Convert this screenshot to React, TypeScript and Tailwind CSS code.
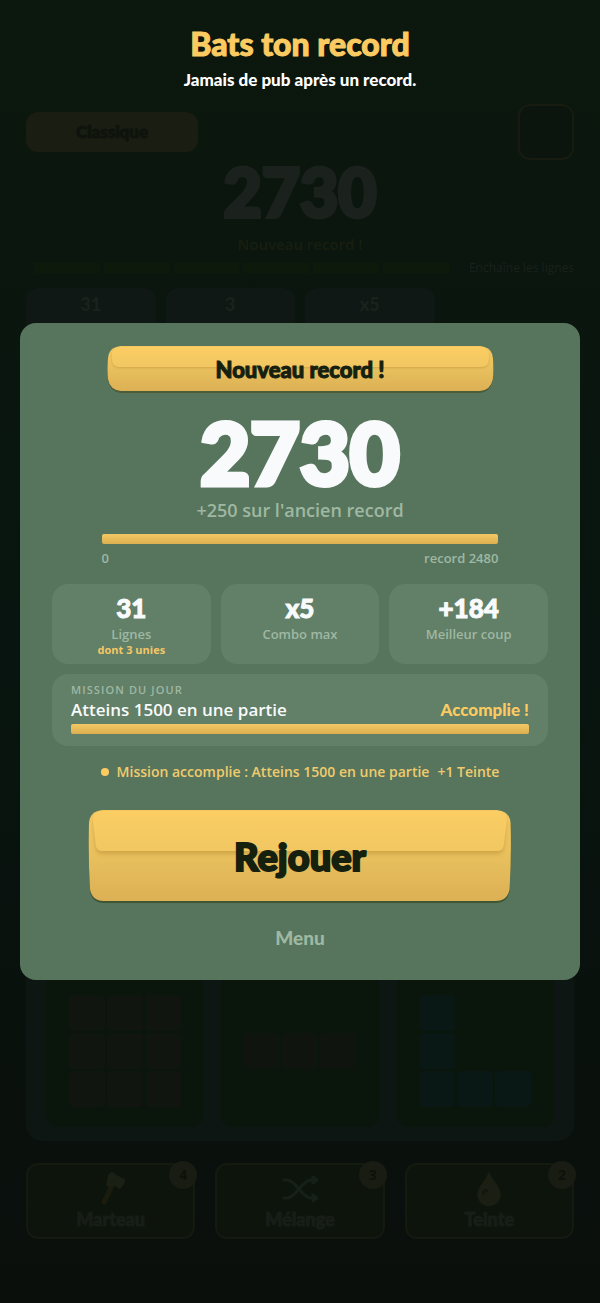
import { useId } from 'react';

const display = "font-['Lato','Open_Sans',sans-serif] font-black";

const stats = [
  { value: '31', label: 'Lignes', note: 'dont 3 unies' },
  { value: 'x5', label: 'Combo max' },
  { value: '+184', label: 'Meilleur coup' },
];

const hudStats = ['31', '3', 'x5'];

// 1 = red block, 2 = brown block, 3 = teal block, 0 = empty
const pieces = [
  [[1, 1, 1], [1, 1, 1], [1, 1, 1]],
  [[2, 2, 2]],
  [[3, 0, 0], [3, 0, 0], [3, 3, 3]],
];

const blockColors = ['', 'bg-[#10150f]', 'bg-[#0f150e]', 'bg-[#091814]'];

const HammerIcon = () => (
  <svg viewBox="0 0 32 36" className="h-9 w-8" aria-hidden="true">
    <path d="M17 14 Q14 22 9 31" stroke="#1a1d0e" strokeWidth="5" strokeLinecap="round" fill="none" />
    <path d="M13 5 Q14 1 18 1 L21 4 L30 8 Q31 10 29 13 L25 18 L20 15 L16 16 L11 15 Z" fill="#1b2015" />
  </svg>
);

const ShuffleIcon = () => (
  <svg viewBox="0 0 36 36" className="size-9" fill="none" stroke="#172018" strokeWidth="3" strokeLinecap="round" strokeLinejoin="round" aria-hidden="true">
    <path d="M2 9 H5 C14 9 20 27 29 27 H34" />
    <path d="M2 27 H5 C14 27 20 9 29 9 H34" />
    <path d="M31 6 L35 9 L31 12 Z M31 24 L35 27 L31 30 Z" />
  </svg>
);

const DropIcon = () => (
  <svg viewBox="0 0 32 40" className="h-9 w-8" aria-hidden="true">
    <path d="M16 0 C18 9 29 17 29 26 A13 13 0 0 1 3 26 C3 17 14 9 16 0 Z" fill="#1b1f13" />
    <path d="M10 25 Q10 20 14 22" stroke="#101710" strokeWidth="3" fill="none" strokeLinecap="round" />
  </svg>
);

const tools = [
  { name: 'Marteau', count: 4, icon: <HammerIcon /> },
  { name: 'Mélange', count: 3, icon: <ShuffleIcon /> },
  { name: 'Teinte', count: 2, icon: <DropIcon /> },
];

// Golden plate with a lighter flap folded over its upper half
const GoldPlate = ({ tall = false }: { tall?: boolean }) => {
  const id = useId();
  return (
    <svg
      viewBox={tall ? '0 0 424 92' : '0 0 388 46'}
      preserveAspectRatio="none"
      className="absolute inset-0 size-full overflow-visible"
      aria-hidden="true"
    >
      <defs>
        <linearGradient id={`${id}base`} x1="0" y1="0" x2="0" y2="1">
          <stop offset="0" stopColor="#f8cb62" />
          <stop offset="0.5" stopColor="#e8c05d" />
          <stop offset="1" stopColor="#dcb055" />
        </linearGradient>
        <linearGradient id={`${id}flap`} x1="0" y1="0" x2="0" y2="1">
          <stop offset="0" stopColor="#fbcd64" />
          <stop offset="1" stopColor="#f1c762" />
        </linearGradient>
        <filter id={`${id}soft`} x="-5%" y="-20%" width="110%" height="150%">
          <feDropShadow dx="0" dy={tall ? 3 : 1} stdDeviation={tall ? 2 : 1} floodColor="#a87c28" floodOpacity="0.4" />
        </filter>
      </defs>
      {tall ? (
        <>
          <path d="M14 2 H410 Q423 3 424 15 Q425 46 423 81 Q421 93 409 93 H15 Q3 93 1 81 Q-1 46 0 15 Q1 3 14 2 Z" fill="#3e5634" />
          <path d="M14 0 H410 Q423 1 424 13 Q425 46 423 79 Q421 91 409 91 H15 Q3 91 1 79 Q-1 46 0 13 Q1 1 14 0 Z" fill={`url(#${id}base)`} />
          <path d="M14 1 H410 Q421 1 420 12 L417 36 Q416 41 410 41 H14 Q8 41 7 36 L4 12 Q3 1 14 1 Z" fill={`url(#${id}flap)`} filter={`url(#${id}soft)`} />
        </>
      ) : (
        <>
          <path d="M14 2 H374 Q386 3 387 14 Q388 24 387 34 Q385 46 374 47 H14 Q3 46 1 34 Q0 24 1 14 Q2 3 14 2 Z" fill="#4d5c38" />
          <path d="M14 0 H374 Q386 1 387 12 Q388 23 387 33 Q385 44 374 45 H14 Q3 44 1 33 Q0 23 1 12 Q2 1 14 0 Z" fill={`url(#${id}base)`} />
          <path d="M14 1 H374 Q383 1 383 9 V13 Q383 21 375 21 H13 Q5 21 5 13 V9 Q5 1 14 1 Z" fill={`url(#${id}flap)`} filter={`url(#${id}soft)`} />
        </>
      )}
    </svg>
  );
};

const GoldBar = ({ label }: { label: string }) => (
  <div
    role="progressbar"
    aria-label={label}
    aria-valuenow={100}
    className="h-2.5 w-full rounded-xs bg-linear-to-b from-[#f4c964] to-[#dcae50]"
  />
);

const Game = () => (
  <main
    aria-hidden="true"
    className="flex min-h-screen flex-col bg-linear-to-b from-[#0c170d] via-[#08140f] to-[#0a0f0c] px-[26px] pt-26 pb-16"
  >
    <div className="flex items-center justify-between">
      <div className={`${display} w-43 rounded-xl bg-[#1a1d12] text-center text-[17px] leading-10 text-[#0e140d] [-webkit-text-stroke:1px_#0e140d]`}>
        Classique
      </div>
      <div className="size-14 rounded-xl border-2 border-[#171b10] bg-[#0c150d]" />
    </div>
    <p className={`${display} text-center text-[66px] leading-16 text-[#1b211d] [-webkit-text-stroke:4px_#1b211d]`}>2730</p>
    <p className="mt-2 text-center text-[15px] leading-6 font-semibold text-[#181e10]">Nouveau record !</p>
    <div className="flex items-center gap-5">
      <div className="grid flex-1 grid-cols-6 gap-1 pl-2">
        {hudStats.concat(hudStats).map((_, i) => (
          <div key={i} className="h-2.5 bg-[#0d190b]" />
        ))}
      </div>
      <p className="text-xs leading-6 text-[#1a211d]">Enchaîne les lignes</p>
    </div>
    <div className="mt-2 grid grid-cols-4 gap-2.5">
      {hudStats.map((value) => (
        <div key={value} className={`${display} h-16 rounded-xl bg-[#0f1814] text-center text-lg leading-8 text-[#1a221d]`}>
          {value}
        </div>
      ))}
    </div>

    <div className="mt-auto grid grid-cols-3 gap-4.5 rounded-2xl bg-[#0d1612] px-5 pt-4 pb-3.5">
      {pieces.map((rows, i) => (
        <div key={i} className="flex h-38 flex-col items-center justify-center gap-0.5 rounded-xl bg-[#0a150c]">
          {rows.map((row, r) => (
            <div key={r} className="flex gap-0.5">
              {row.map((cell, c) => (
                <div key={c} className={`size-9 rounded-sm ${blockColors[cell]}`} />
              ))}
            </div>
          ))}
        </div>
      ))}
    </div>

    <div className="mt-5.5 grid grid-cols-3 gap-5">
      {tools.map((tool) => (
        <div key={tool.name} className="relative flex h-19 flex-col items-center justify-center rounded-xl border-2 border-[#151a11] bg-[#0c140c]">
          {tool.icon}
          <span className={`${display} text-lg leading-6 text-[#171e17] [-webkit-text-stroke:1px_#171e17]`}>{tool.name}</span>
          <span className="absolute -top-1 -right-1 flex size-7 items-center justify-center rounded-full bg-[#191c13] text-sm font-bold text-[#0c120b]">
            {tool.count}
          </span>
        </div>
      ))}
    </div>
  </main>
);

const ResultPanel = () => (
  <section
    role="dialog"
    aria-label="Nouveau record"
    className="mx-5 flex flex-col items-center rounded-2xl bg-[#57755d] px-8 pt-[23px] pb-[26px]"
  >
    <div className="relative h-11.5 w-[78%]">
      <GoldPlate />
      <h2 className={`${display} relative text-center text-[22px] leading-12 text-[#15200f] [-webkit-text-stroke:1px_#15200f]`}>
        Nouveau record !
      </h2>
    </div>

    <p className={`${display} mt-6 text-[86px] leading-18 text-[#f8fafb] [-webkit-text-stroke:5px_#f8fafb]`}>2730</p>
    <p className="mt-2 text-lg leading-7 font-semibold text-[#9fb8a2]">+250 sur l'ancien record</p>

    <div className="mt-2.5 w-[80%]">
      <GoldBar label="Record" />
      <div className="mt-1 flex justify-between text-[13px] leading-5 font-semibold text-[#9fb8a2]">
        <span>0</span>
        <span>record 2480</span>
      </div>
    </div>

    <div className="mt-4 grid w-full grid-cols-3 gap-2.5">
      {stats.map((stat) => (
        <div key={stat.label} className="flex min-h-20 flex-col items-center rounded-2xl bg-[#627f68] pt-3 pb-1">
          <span className={`${display} text-[26px] leading-6 text-[#f8fafb] [-webkit-text-stroke:1px_#f8fafb]`}>{stat.value}</span>
          <span className="mt-1 text-[13px] leading-5 font-semibold text-[#9fb8a2]">{stat.label}</span>
          {stat.note && <span className="text-[11px] leading-3 font-bold text-[#f3c765]">{stat.note}</span>}
        </div>
      ))}
    </div>

    <div className="mt-2.5 w-full rounded-2xl bg-[#627f68] px-[19px] pt-2 pb-3">
      <p className="text-[11px] leading-4 font-semibold tracking-widest text-[#9fb8a2]">MISSION DU JOUR</p>
      <div className="mb-0.5 flex items-center justify-between leading-6">
        <span className="text-[17px] font-semibold text-[#f8fafb]">Atteins 1500 en une partie</span>
        <span className={`${display} text-[17px] text-[#fbcb62]`}>Accomplie !</span>
      </div>
      <GoldBar label="Mission du jour" />
    </div>

    <p className="mt-4 flex items-center gap-2 text-sm leading-5 font-semibold text-[#f0cb6d]">
      <span className="size-2 rounded-full bg-[#fbcb62]" />
      <span>Mission accomplie : Atteins 1500 en une partie</span>
      <span>+1 Teinte</span>
    </p>

    <button type="button" className="relative mt-7 h-23 w-[85%] cursor-pointer">
      <GoldPlate tall />
      <span className={`${display} relative text-[38px] leading-10 text-[#15200f] [-webkit-text-stroke:2px_#15200f]`}>Rejouer</span>
    </button>
    <button type="button" className={`${display} mt-5 cursor-pointer px-6 text-[19px] leading-8 text-[#9fb8a2]`}>
      Menu
    </button>
  </section>
);

const App = () => (
  <div className="relative font-['Open_Sans','Noto_Sans',sans-serif]">
    <Game />
    <div className="absolute inset-0 grid grid-rows-[1fr_auto_1fr]">
      <header className="pt-6 text-center">
        <h1 className={`${display} text-[32px] leading-10 text-[#fbcb62] [-webkit-text-stroke:1px_#fbcb62]`}>Bats ton record</h1>
        <p className={`${display} mt-1 text-[17px] leading-6 text-white`}>Jamais de pub après un record.</p>
      </header>
      <ResultPanel />
    </div>
  </div>
);

export default App;
